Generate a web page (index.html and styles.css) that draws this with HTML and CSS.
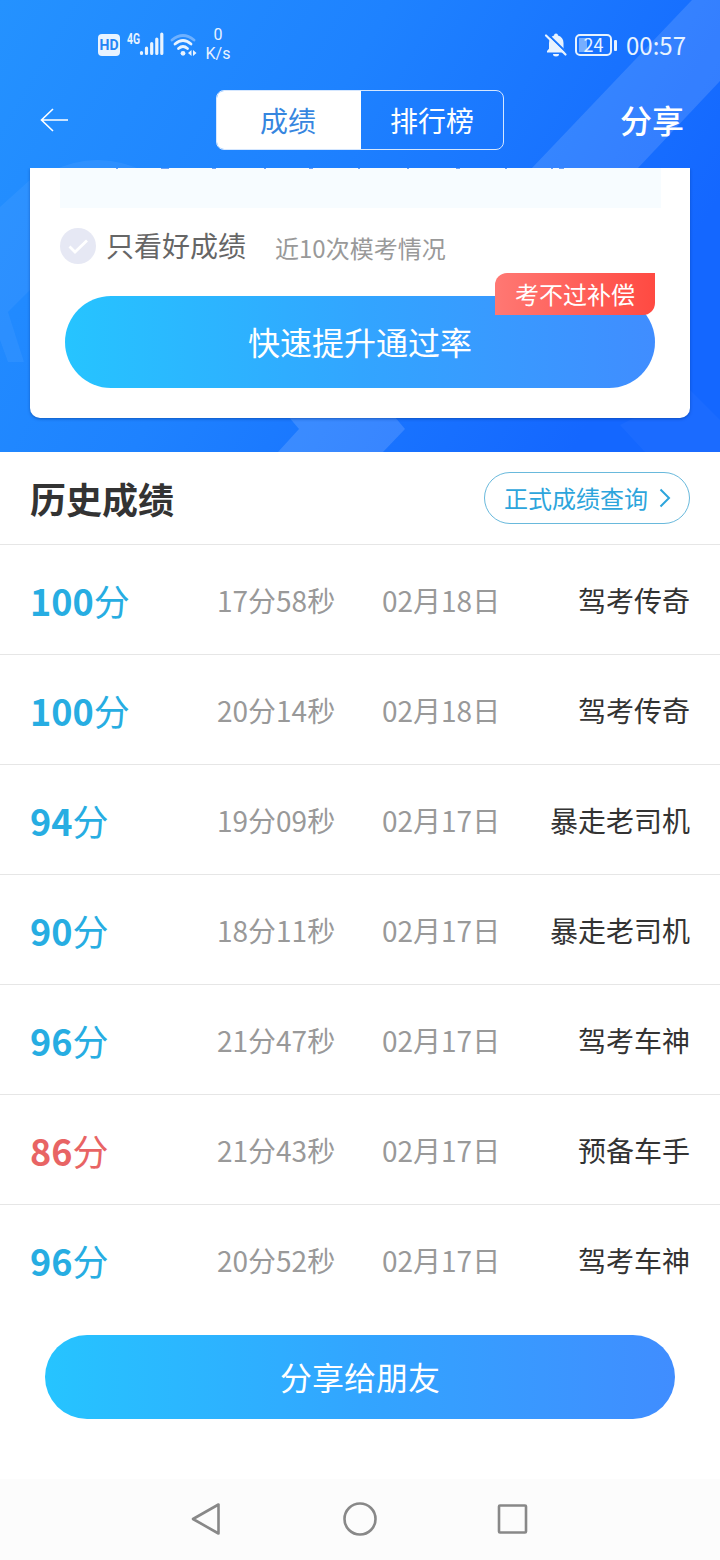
FILE: index.html
```html
<!DOCTYPE html>
<html lang="zh-CN">
<head>
    <meta charset="UTF-8">
    <meta name="viewport" content="width=device-width, initial-scale=1.0">
    <title>历史成绩</title>
    <link rel="stylesheet" href="styles.css">
</head>
<body>
<section class="hero">
    <svg class="hero-bg" viewBox="0 0 720 452">
        <path d="M692 0H720V81L638 168H532Z" fill="#fff" fill-opacity=".13"/>
        <path d="M50 172Q97 148 146 172Z" fill="#fff" fill-opacity=".06"/>
        <path d="M0 207L30 180V290L8 312L24 362H8L0 340Z" fill="#fff" fill-opacity=".05"/>
        <path d="M288 416L299 429L278 452H383L405 429L394 416Z" fill="#fff" fill-opacity=".14"/>
        <path d="M690 390L720 420V452H645L620 425Z" fill="#fff" fill-opacity=".03"/>
    </svg>

    <div class="status-bar">
        <div class="status-left">
            <span class="hd">HD</span>
            <span class="net">4G</span>
            <svg class="signal" width="25" height="24" viewBox="0 0 25 24">
                <path d="M2.5 20.5v1M7.5 16v5.5M12.7 11.5v10M17.8 7v14.5M22.8 2v19.5" stroke="#e8f3ff" stroke-width="3.2" stroke-linecap="round"/>
            </svg>
            <svg class="wifi" width="28" height="26" viewBox="0 0 28 26" fill="none">
                <path d="M2 8Q13 -1 24 8" stroke="#6fb1ff" stroke-width="2.8" stroke-linecap="round"/>
                <path d="M5 12Q13 5 21 12M8.5 16.5Q13 12.5 17.5 16.5" stroke="#e8f3ff" stroke-width="2.8" stroke-linecap="round"/>
                <circle cx="13" cy="21.3" r="2.4" fill="#e8f3ff"/>
                <path d="M21.5 18v6l-3.500-3zM23 18v6l3.500-3z" fill="#e8f3ff"/>
            </svg>
            <div class="speed">0<br>K/s</div>
        </div>
        <div class="status-right">
            <svg class="bell" width="24" height="24" viewBox="0 0 24 24">
                <path d="M3 19.5V18l2-2.300V10C5 6 7 3.500 10 2.500a2 2 0 0 1 4 0c3.500 1 5.500 3.500 5.500 7.500v5.500l2 2.500v1.500zM9 21h6a3 2.500 0 0 1-6 0z" fill="#e8f3ff"/>
                <path d="M3.5 1L24 21" stroke="#1a78ff" stroke-width="2"/>
                <path d="M2 2.5L21.5 21.5" stroke="#e8f3ff" stroke-width="2.2" stroke-linecap="round"/>
            </svg>
            <div class="battery">24</div>
            <span class="clock">00:57</span>
        </div>
    </div>

    <header class="nav">
        <svg class="back" width="28" height="24" viewBox="0 0 28 24" fill="none" stroke="#fff" stroke-width="1.6">
            <path d="M28 12H1.5M13 1L1.5 12L13 23"/>
        </svg>
        <div class="tabs">
            <div class="tab active">成绩</div>
            <div class="tab">排行榜</div>
        </div>
        <div class="share">分享</div>
    </header>

    <div class="card">
        <div class="chart">
            <!-- bottoms of the axis labels that are scrolled under the header -->
            <svg width="601" height="1" viewBox="0 0 601 1">
                <path d="M56 .5h2M101 .5h8M152 .5h4M204 .5h2M249 .5h4M298 .5h2M347 .5h2M396 .5h4M445 .5h2M491 .5h2M499 .5h5" stroke="#6ea2f5"/>
            </svg>
        </div>
        <div class="filter">
            <svg width="36" height="36" viewBox="0 0 36 36" fill="none">
                <circle cx="18" cy="18" r="18" fill="#e6e8f4"/>
                <path d="M9.5 18.5L15 24L27 12.5" stroke="#fff" stroke-width="2.8"/>
            </svg>
            <span class="filter-name">只看好成绩</span>
            <span class="filter-note">近10次模考情况</span>
        </div>
        <div class="improve">
            快速提升通过率
            <span class="badge">考不过补偿</span>
        </div>
    </div>
</section>

<section class="history">
    <div class="history-head">
        <h2>历史成绩</h2>
        <div class="query">
            <span>正式成绩查询</span>
            <svg width="12" height="20" viewBox="0 0 12 20" fill="none" stroke="#2da5dc" stroke-width="2">
                <path d="M1.5 1.5L10 10L1.5 18.5"/>
            </svg>
        </div>
    </div>
    <div class="row"><div class="score"><b>100</b>分</div><div class="time">17分58秒</div><div class="date">02月18日</div><div class="rank">驾考传奇</div></div>
    <div class="row"><div class="score"><b>100</b>分</div><div class="time">20分14秒</div><div class="date">02月18日</div><div class="rank">驾考传奇</div></div>
    <div class="row"><div class="score"><b>94</b>分</div><div class="time">19分09秒</div><div class="date">02月17日</div><div class="rank">暴走老司机</div></div>
    <div class="row"><div class="score"><b>90</b>分</div><div class="time">18分11秒</div><div class="date">02月17日</div><div class="rank">暴走老司机</div></div>
    <div class="row"><div class="score"><b>96</b>分</div><div class="time">21分47秒</div><div class="date">02月17日</div><div class="rank">驾考车神</div></div>
    <div class="row"><div class="score fail"><b>86</b>分</div><div class="time">21分43秒</div><div class="date">02月17日</div><div class="rank">预备车手</div></div>
    <div class="row"><div class="score"><b>96</b>分</div><div class="time">20分52秒</div><div class="date">02月17日</div><div class="rank">驾考车神</div></div>
</section>

<div class="share-friend">分享给朋友</div>

<nav class="system-nav">
    <svg width="34" height="36" viewBox="0 0 34 36"><path d="M28.5 3.5V32.5L3 18Z"/></svg>
    <svg width="36" height="36" viewBox="0 0 36 36"><circle cx="18" cy="18" r="15.5"/></svg>
    <svg width="34" height="36" viewBox="0 0 34 36"><rect x="3" y="4.5" width="27" height="27" rx="1"/></svg>
</nav>
</body>
</html>
```
FILE: styles.css
```css
* {
    box-sizing: border-box;
}
body {
    margin: 0;
    width: 720px;
    height: 1560px;
    display: flex;
    flex-direction: column;
    overflow: hidden;
    background: #fff;
    color: #333;
    font-family: "Noto Sans CJK SC", sans-serif;
    white-space: nowrap;
}
svg {
    display: block;
    flex: none;
}

/* Blue top area */
.hero {
    position: relative;
    height: 452px;
    flex: none;
    background: linear-gradient(120deg, #2492ff 0%, #1e82ff 40%, #1467ff 85%, #1467ff 100%);
}
.hero-bg {
    position: absolute;
    inset: 0;
    width: 720px;
    height: 452px;
}
.status-bar,
.nav,
.card {
    position: relative;
}
.status-bar {
    height: 90px;
    padding: 0 34px 0 98px;
    display: flex;
    justify-content: space-between;
    align-items: center;
    color: #e8f3ff;
}
.status-left,
.status-right {
    display: flex;
    align-items: center;
    height: 40px;
}
.hd {
    width: 22px;
    height: 22px;
    margin: -1px 7px 0 0;
    border-radius: 4px;
    background: #e8f3ff;
    color: #2484f5;
    font: bold 14px/22px Roboto, sans-serif;
    text-align: center;
}
.net {
    width: 12px;
    margin-top: -13px;
    font: bold 14px/12px Roboto, sans-serif;
    transform: scaleX(.74);
    transform-origin: left;
}
.signal {
    margin: -2px 0 0;
}
.wifi {
    margin: -1px 0 0 6px;
}
.speed {
    width: 26px;
    margin: -2px 0 0 7px;
    font: 16px/19px Roboto, sans-serif;
    text-align: center;
}
.bell {
    margin: -1px 7px 0 0;
}
.battery {
    position: relative;
    width: 37px;
    height: 22px;
    margin: -1px 14px 0 0;
    border: 2px solid #e8f3ff;
    border-radius: 5px;
    background: linear-gradient(#76aeff, #76aeff) 2px 2px / 8px 14px no-repeat;
    font: 18px/17px "Noto Sans CJK SC", sans-serif;
    text-align: center;
}
.battery::after {
    content: "";
    position: absolute;
    top: 4px;
    right: -7px;
    width: 3px;
    height: 11px;
    border-radius: 1px;
    background: #e8f3ff;
}
.clock {
    font-size: 24px;
    line-height: 40px;
}

/* Header with tabs */
.nav {
    height: 78px;
    padding: 0 36px 18px 40px;
    display: flex;
    align-items: center;
    color: #fff;
}
.tabs {
    display: flex;
    width: 288px;
    height: 60px;
    margin-left: 148px;
    border: 1px solid #d5e7ff;
    border-radius: 8px;
    overflow: hidden;
}
.tab {
    flex: 1;
    font-size: 28px;
    line-height: 59px;
    text-align: center;
}
.tab.active {
    flex: 0 0 144px;
    padding-right: 2px;
    background: #fff;
    color: #3686df;
}
.share {
    margin-left: auto;
    font-size: 32px;
    line-height: 58px;
    height: 60px;
    font-weight: 500;
}

/* Card */
.card {
    height: 250px;
    margin: 0 30px;
    padding: 0 29px 30px 30px;
    border-radius: 0 0 10px 10px;
    background: #fff;
    box-shadow: 0 1px 3px rgba(0, 50, 130, .5);
    clip-path: inset(0 -8px -8px -8px);
}
.chart {
    height: 40px;
    background: #f7fcff;
}
.filter {
    height: 88px;
    padding-bottom: 12px;
    display: flex;
    align-items: center;
}
.filter-name {
    margin: -2px 0 0 10px;
    color: #666;
    font-size: 28px;
}
.filter-note {
    margin: 2px 0 0 29px;
    color: #999;
    font-size: 24px;
}
.improve {
    position: relative;
    height: 92px;
    margin: 0 6px 0 5px;
    border-radius: 46px;
    background: linear-gradient(90deg, #26c4ff, #32a5ff 50%, #408dff);
    color: #fff;
    font-size: 32px;
    line-height: 91px;
    text-align: center;
}
.badge {
    position: absolute;
    top: -23px;
    right: 0;
    width: 160px;
    height: 42px;
    border-radius: 12px 0 12px 0;
    background: linear-gradient(90deg, #ff7873, #ff4a42);
    font-size: 24px;
    line-height: 41px;
}

/* History list */
.history-head {
    height: 93px;
    padding: 0 30px;
    display: flex;
    align-items: center;
    justify-content: space-between;
    border-bottom: 1px solid #e6e6e6;
}
.history-head h2 {
    margin: 0;
    font-size: 36px;
}
.query {
    width: 206px;
    height: 52px;
    padding-left: 19px;
    display: flex;
    align-items: center;
    gap: 11px;
    border: 1px solid #69b9dc;
    border-radius: 26px;
    color: #2da5dc;
    font-size: 24px;
}
.query span {
    margin-top: -2px;
}
.row {
    height: 110px;
    padding: 0 30px;
    display: grid;
    grid-template-columns: 187px 165px auto 1fr;
    align-items: center;
    border-bottom: 1px solid #e6e6e6;
    font-size: 28px;
}
.row:last-child {
    border-bottom: 0;
}
.score {
    color: #27ade2;
    font-size: 36px;
}
.fail {
    color: #e86464;
}
.time,
.date {
    color: #999;
}
.rank {
    text-align: right;
}

.share-friend {
    height: 84px;
    margin: 20px 45px 0;
    flex: none;
    border-radius: 42px;
    background: linear-gradient(90deg, #26c4ff, #32a5ff 50%, #408dff);
    color: #fff;
    font-size: 32px;
    line-height: 83px;
    text-align: center;
}

/* System buttons */
.system-nav {
    height: 81px;
    margin-top: auto;
    padding: 0 190px 1px;
    display: flex;
    align-items: center;
    justify-content: space-between;
    background: #fcfcfc;
}
.system-nav svg {
    fill: none;
    stroke: #888;
    stroke-width: 2.6;
    stroke-linejoin: round;
}
```
